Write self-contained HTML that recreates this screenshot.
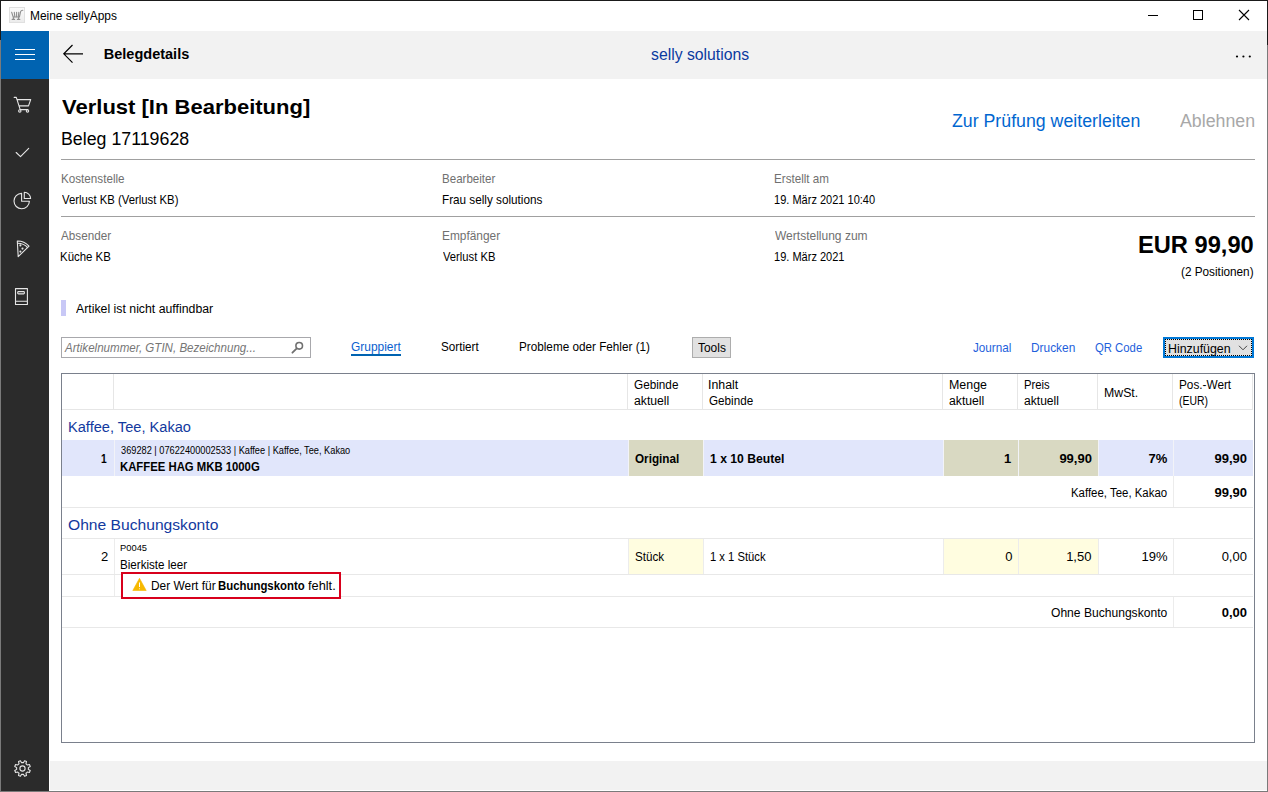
<!DOCTYPE html>
<html><head><meta charset="utf-8">
<style>
html,body{margin:0;padding:0;}
body{width:1268px;height:792px;overflow:hidden;position:relative;background:#fff;font-family:"Liberation Sans",sans-serif;color:#000;}
.a{position:absolute;}
.t{position:absolute;white-space:pre;transform-origin:0 0;}
.hl{position:absolute;height:1px;}
.vl{position:absolute;width:1px;}
svg{position:absolute;overflow:visible;}
</style></head><body>
<!-- window border -->
<div class="a" style="left:0;top:0;width:1268px;height:1px;background:#1a1a1a"></div>
<div class="a" style="left:0;top:0;width:1px;height:40px;background:#1a1a1a"></div>
<div class="a" style="left:0;top:40px;width:1px;height:752px;background:#7a7a7a"></div>
<div class="a" style="left:1267px;top:0;width:1px;height:45px;background:#1a1a1a"></div>
<div class="a" style="left:1267px;top:45px;width:1px;height:747px;background:#7a7a7a"></div>
<div class="a" style="left:0;top:791px;width:1268px;height:1px;background:#7a7a7a"></div>

<!-- app icon -->
<div class="a" style="left:9px;top:7px;width:14px;height:14px;border:1px solid #e0e0e0;background:linear-gradient(#fbfbfb,#ececec)"></div>
<svg style="left:0;top:0" width="30" height="30" viewBox="0 0 30 30"><g fill="none" stroke="#8e8e8e" stroke-width="1.1" stroke-linecap="round"><path d="M11.6 12.2 L13.2 17 H19.4 L20.6 11.6 Q21 10.2 22.8 10.2"/><path d="M14.3 12.2 L14.8 16.6 M16.6 12.2 V16.6 M18.8 12.2 L18.4 16.6"/><path d="M12.2 19.4 H14.6 M17.4 19.4 H19.8 M13.4 17.2 V19.2 M18.6 17.2 V19.2"/></g></svg>
<!-- title bar controls -->
<div class="a" style="left:1148px;top:15px;width:10px;height:1px;background:#000"></div>
<div class="a" style="left:1193px;top:10px;width:8px;height:8px;border:1px solid #000"></div>
<svg style="left:0;top:0" width="1268" height="30"><path d="M1239 10 L1249 20 M1249 10 L1239 20" stroke="#000" stroke-width="1.1" fill="none"/></svg>

<!-- hamburger -->
<div class="a" style="left:1px;top:31px;width:48px;height:48px;background:#0063b1"></div>
<div class="a" style="left:15px;top:49px;width:20px;height:1px;background:#fff"></div>
<div class="a" style="left:15px;top:54px;width:20px;height:1px;background:#fff"></div>
<div class="a" style="left:15px;top:59px;width:20px;height:1px;background:#fff"></div>
<!-- nav -->
<div class="a" style="left:1px;top:79px;width:48px;height:712px;background:#2b2b2b"></div>
<svg style="left:0;top:0" width="50" height="792" viewBox="0 0 50 792">
 <g fill="none" stroke="#e6e6e6" stroke-width="1.1" stroke-linecap="round" stroke-linejoin="round">
  <!-- cart -->
  <path d="M14.2 97.4 H16.3 L20.2 109.6 H27.8 M16.9 99.6 H30.7 L28.5 105.9 H19.2"/>
  <circle cx="19.8" cy="110.9" r="1.2"/><circle cx="27.5" cy="110.9" r="1.2"/>
  <!-- check -->
  <path d="M16.2 152.5 L20.5 156.7 L28.7 148.3"/>
  <!-- pie -->
  <path d="M21.6 193.4 A7.7 7.7 0 1 0 29.4 201.3 H21.6 Z"/>
  <path d="M24.3 192.2 A6.4 6.4 0 0 1 30.6 198.5 H24.3 Z"/>
  <!-- pizza -->
  <path d="M17.3 241 Q24 240.8 29 246.2 L18.2 256.6 Z"/>
  <path d="M17.6 243.2 Q23.8 243.2 27.6 247.6"/>
  <circle cx="20.4" cy="245.4" r="0.5"/><circle cx="22.5" cy="248.6" r="0.5"/><circle cx="20.4" cy="251.6" r="0.5"/>
  <!-- book -->
  <path d="M15.5 288.6 H27.4 V304.5 H15.5 Z M15.5 301.2 H27.4"/>
  <rect x="17.7" y="291.6" width="6.7" height="2.3" rx="0.8"/>
  <!-- gear -->
  <path d="M22.50 762.60 L23.40 762.67 L24.58 760.77 L26.49 761.57 L25.99 763.74 L26.67 764.33 L27.26 765.01 L29.43 764.51 L30.23 766.42 L28.33 767.60 L28.40 768.50 L28.33 769.40 L30.23 770.58 L29.43 772.49 L27.26 771.99 L26.67 772.67 L25.99 773.26 L26.49 775.43 L24.58 776.23 L23.40 774.33 L22.50 774.40 L21.60 774.33 L20.42 776.23 L18.51 775.43 L19.01 773.26 L18.33 772.67 L17.74 771.99 L15.57 772.49 L14.77 770.58 L16.67 769.40 L16.60 768.50 L16.67 767.60 L14.77 766.42 L15.57 764.51 L17.74 765.01 L18.33 764.33 L19.01 763.74 L18.51 761.57 L20.42 760.77 L21.60 762.67 Z"/>
  <circle cx="22.5" cy="768.5" r="2.6"/>
 </g>
</svg>

<!-- header -->
<div class="a" style="left:50px;top:31px;width:1217px;height:48px;background:#f2f2f2"></div>
<svg style="left:0;top:0" width="1268" height="80"><path d="M63.8 53.8 H83 M72.5 45 L63.8 53.8 L72.5 62.6" fill="none" stroke="#000" stroke-width="1.2"/>
<circle cx="1237" cy="56.5" r="1.1" fill="#000"/><circle cx="1243.4" cy="56.5" r="1.1" fill="#000"/><circle cx="1249.8" cy="56.5" r="1.1" fill="#000"/></svg>

<!-- bottom bar -->
<div class="a" style="left:50px;top:761px;width:1217px;height:29px;background:#f2f2f2"></div>

<!-- separators -->
<div class="hl" style="left:61px;top:159px;width:1194px;background:#a0a0a0"></div>
<div class="hl" style="left:61px;top:216px;width:1194px;background:#a0a0a0"></div>

<!-- info bar -->
<div class="a" style="left:61px;top:300px;width:5px;height:16px;background:#c8c8f6"></div>

<!-- search -->
<div class="a" style="left:61px;top:337px;width:248px;height:19px;border:1px solid #a8a8ac"></div>
<svg style="left:0;top:0" width="400" height="400"><circle cx="299.2" cy="345.8" r="3.3" fill="none" stroke="#707070" stroke-width="1.6"/><path d="M296.8 348.3 L292.4 352.7" stroke="#707070" stroke-width="1.8" stroke-linecap="round"/></svg>
<div class="a" style="left:351px;top:354px;width:50px;height:2px;background:#0063b1"></div>
<!-- tools -->
<div class="a" style="left:692px;top:337px;width:37px;height:19px;background:#e1e1e1;border:1px solid #adadad"></div>
<!-- hinzufuegen -->
<div class="a" style="left:1163px;top:337px;width:87px;height:17px;background:#e1e1e1;border:2px solid #0078d7"></div>
<div class="a" style="left:1165px;top:339px;width:85px;height:15px;border:1px dotted #000"></div>
<svg style="left:0;top:0" width="1268" height="400"><path d="M1239 345.8 L1243 349.8 L1247 345.8" fill="none" stroke="#444" stroke-width="1"/></svg>

<!-- table -->
<div class="a" style="left:61px;top:373px;width:1192px;height:368px;border:1px solid #7a808c"></div>
<div class="hl" style="left:62px;top:409px;width:1191px;background:#e6e6e6"></div>
<div class="vl" style="left:113px;top:374px;height:35px;background:#e6e6e6"></div><div class="vl" style="left:627px;top:374px;height:35px;background:#e6e6e6"></div><div class="vl" style="left:702px;top:374px;height:35px;background:#e6e6e6"></div><div class="vl" style="left:942px;top:374px;height:35px;background:#e6e6e6"></div><div class="vl" style="left:1017px;top:374px;height:35px;background:#e6e6e6"></div><div class="vl" style="left:1097px;top:374px;height:35px;background:#e6e6e6"></div><div class="vl" style="left:1172px;top:374px;height:35px;background:#e6e6e6"></div><div class="vl" style="left:1252px;top:374px;height:35px;background:#e6e6e6"></div>
<!-- row1 -->
<div class="a" style="left:62px;top:440px;width:1191px;height:36px;background:#e1e6fb"></div>
<div class="a" style="left:629px;top:440px;width:74px;height:36px;background:#d9d9c2"></div>
<div class="a" style="left:944px;top:440px;width:74px;height:36px;background:#d9d9c2"></div>
<div class="a" style="left:1019px;top:440px;width:79px;height:36px;background:#d9d9c2"></div>
<div class="vl" style="left:114px;top:440px;height:36px;background:#f2f3f8"></div><div class="vl" style="left:628px;top:440px;height:36px;background:#f2f3f8"></div><div class="vl" style="left:703px;top:440px;height:36px;background:#f2f3f8"></div><div class="vl" style="left:943px;top:440px;height:36px;background:#f2f3f8"></div><div class="vl" style="left:1018px;top:440px;height:36px;background:#f2f3f8"></div><div class="vl" style="left:1098px;top:440px;height:36px;background:#f2f3f8"></div><div class="vl" style="left:1173px;top:440px;height:36px;background:#f2f3f8"></div><div class="vl" style="left:1173px;top:476px;height:31px;background:#ececec"></div>
<div class="hl" style="left:62px;top:507px;width:1191px;background:#e8e8e8"></div>
<div class="hl" style="left:62px;top:538px;width:1191px;background:#e8e8e8"></div>
<div class="a" style="left:629px;top:539px;width:74px;height:35px;background:#fffde0"></div>
<div class="a" style="left:944px;top:539px;width:74px;height:35px;background:#fffde0"></div>
<div class="a" style="left:1019px;top:539px;width:79px;height:35px;background:#fffde0"></div>
<div class="vl" style="left:114px;top:539px;height:35px;background:#ececec"></div><div class="vl" style="left:628px;top:539px;height:35px;background:#ececec"></div><div class="vl" style="left:703px;top:539px;height:35px;background:#ececec"></div><div class="vl" style="left:943px;top:539px;height:35px;background:#ececec"></div><div class="vl" style="left:1018px;top:539px;height:35px;background:#ececec"></div><div class="vl" style="left:1098px;top:539px;height:35px;background:#ececec"></div><div class="vl" style="left:1173px;top:539px;height:35px;background:#ececec"></div><div class="vl" style="left:114px;top:575px;height:21px;background:#ececec"></div><div class="vl" style="left:1173px;top:597px;height:30px;background:#ececec"></div>
<div class="hl" style="left:62px;top:574px;width:1191px;background:#e8e8e8"></div>
<div class="hl" style="left:62px;top:596px;width:1191px;background:#e8e8e8"></div>
<div class="hl" style="left:62px;top:627px;width:1191px;background:#e8e8e8"></div>
<!-- error box -->
<div class="a" style="left:121px;top:572px;width:216px;height:23px;border:2px solid #d8001c;background:#fff"></div>
<svg style="left:0;top:0" width="400" height="700"><path d="M139.5 578.3 L146.2 590.5 H132.8 Z" fill="#f7b900" stroke="#f7b900" stroke-width="0.6" stroke-linejoin="round"/><path d="M139.5 582.5 V587" stroke="#fff" stroke-width="1"/><circle cx="139.5" cy="588.7" r="0.5" fill="#fff"/></svg>

<div class="t" style="left:29.55px;top:8px;font-size:12.5px;line-height:17px;transform:scaleX(0.9546);">Meine sellyApps</div>
<div class="t" style="left:103.80px;top:45px;font-size:14.5px;line-height:19px;font-weight:700;">Belegdetails</div>
<div class="t" style="left:651.01px;top:44px;font-size:16px;line-height:21px;color:#0a3aa0;transform:scaleX(0.9848);">selly solutions</div>
<div class="t" style="left:61.90px;top:93px;font-size:21px;line-height:28px;font-weight:700;transform:scaleX(1.0481);">Verlust [In Bearbeitung]</div>
<div class="t" style="left:60.58px;top:128px;font-size:17.5px;line-height:23px;transform:scaleX(1.0157);">Beleg 17119628</div>
<div class="t" style="left:952.09px;top:110px;font-size:17.5px;line-height:23px;color:#0066d0;transform:scaleX(1.0138);">Zur Prüfung weiterleiten</div>
<div class="t" style="left:1180.20px;top:110px;font-size:17.5px;line-height:23px;color:#a8a8a8;transform:scaleX(1.0148);">Ablehnen</div>
<div class="t" style="left:60.80px;top:170px;font-size:13px;line-height:17px;color:#707070;transform:scaleX(0.8977);">Kostenstelle</div>
<div class="t" style="left:441.81px;top:170px;font-size:13px;line-height:17px;color:#707070;transform:scaleX(0.8887);">Bearbeiter</div>
<div class="t" style="left:773.81px;top:170px;font-size:13px;line-height:17px;color:#707070;transform:scaleX(0.8947);">Erstellt am</div>
<div class="t" style="left:61.70px;top:191px;font-size:13px;line-height:17px;transform:scaleX(0.8711);">Verlust KB (Verlust KB)</div>
<div class="t" style="left:441.60px;top:191px;font-size:13px;line-height:17px;transform:scaleX(0.9020);">Frau selly solutions</div>
<div class="t" style="left:773.94px;top:191px;font-size:13px;line-height:17px;transform:scaleX(0.8481);">19. März 2021 10:40</div>
<div class="t" style="left:61.00px;top:227px;font-size:13px;line-height:17px;color:#707070;transform:scaleX(0.8988);">Absender</div>
<div class="t" style="left:441.79px;top:227px;font-size:13px;line-height:17px;color:#707070;transform:scaleX(0.9142);">Empfänger</div>
<div class="t" style="left:774.70px;top:227px;font-size:13px;line-height:17px;color:#707070;transform:scaleX(0.9240);">Wertstellung zum</div>
<div class="t" style="left:60.12px;top:248px;font-size:13px;line-height:17px;transform:scaleX(0.8799);">Küche KB</div>
<div class="t" style="left:442.70px;top:248px;font-size:13px;line-height:17px;transform:scaleX(0.8630);">Verlust KB</div>
<div class="t" style="left:773.94px;top:248px;font-size:13px;line-height:17px;transform:scaleX(0.8483);">19. März 2021</div>
<div class="t" style="left:1138.15px;top:229px;font-size:24.5px;line-height:32px;font-weight:700;transform:scaleX(0.9657);">EUR 99,90</div>
<div class="t" style="left:1181.14px;top:264px;font-size:12.5px;line-height:17px;transform:scaleX(0.9410);">(2 Positionen)</div>
<div class="t" style="left:76.20px;top:301px;font-size:12.5px;line-height:17px;transform:scaleX(0.9838);">Artikel ist nicht auffindbar</div>
<div class="t" style="left:65.02px;top:339px;font-size:13px;line-height:17px;color:#767676;font-style:italic;transform:scaleX(0.8897);">Artikelnummer, GTIN, Bezeichnung...</div>
<div class="t" style="left:351.05px;top:338px;font-size:13px;line-height:17px;color:#0a5fcf;transform:scaleX(0.9183);">Gruppiert</div>
<div class="t" style="left:441.15px;top:338px;font-size:13px;line-height:17px;transform:scaleX(0.8988);">Sortiert</div>
<div class="t" style="left:518.50px;top:338px;font-size:13px;line-height:17px;transform:scaleX(0.9017);">Probleme oder Fehler (1)</div>
<div class="t" style="left:697.52px;top:339px;font-size:13px;line-height:17px;transform:scaleX(0.9177);">Tools</div>
<div class="t" style="left:972.82px;top:339px;font-size:13px;line-height:17px;color:#1e5fdc;transform:scaleX(0.9004);">Journal</div>
<div class="t" style="left:1030.89px;top:339px;font-size:13px;line-height:17px;color:#1e5fdc;transform:scaleX(0.9146);">Drucken</div>
<div class="t" style="left:1095.08px;top:339px;font-size:13px;line-height:17px;color:#1e5fdc;transform:scaleX(0.8707);">QR Code</div>
<div class="t" style="left:1167.75px;top:340px;font-size:13px;line-height:17px;transform:scaleX(0.9525);">Hinzufügen</div>
<div class="t" style="left:633.91px;top:377px;font-size:12px;line-height:16px;transform:scaleX(0.9798);">Gebinde</div>
<div class="t" style="left:633.99px;top:393px;font-size:12px;line-height:16px;transform:scaleX(1.0173);">aktuell</div>
<div class="t" style="left:708.47px;top:377px;font-size:12px;line-height:16px;transform:scaleX(1.0276);">Inhalt</div>
<div class="t" style="left:709.02px;top:393px;font-size:12px;line-height:16px;transform:scaleX(0.9730);">Gebinde</div>
<div class="t" style="left:948.57px;top:377px;font-size:12px;line-height:16px;transform:scaleX(1.0335);">Menge</div>
<div class="t" style="left:948.99px;top:393px;font-size:12px;line-height:16px;transform:scaleX(1.0173);">aktuell</div>
<div class="t" style="left:1023.76px;top:377px;font-size:12px;line-height:16px;transform:scaleX(0.9370);">Preis</div>
<div class="t" style="left:1024.10px;top:393px;font-size:12px;line-height:16px;transform:scaleX(1.0083);">aktuell</div>
<div class="t" style="left:1103.58px;top:385px;font-size:12px;line-height:16px;transform:scaleX(1.0255);">MwSt.</div>
<div class="t" style="left:1178.72px;top:377px;font-size:12px;line-height:16px;transform:scaleX(0.9811);">Pos.-Wert</div>
<div class="t" style="left:1178.99px;top:393px;font-size:12px;line-height:16px;transform:scaleX(0.8675);">(EUR)</div>
<div class="t" style="left:67.87px;top:416px;font-size:15.5px;line-height:21px;color:#12399e;transform:scaleX(0.9428);">Kaffee, Tee, Kakao</div>
<div class="t" style="left:101.37px;top:450px;font-size:13px;line-height:17px;font-weight:700;transform:scaleX(0.7869);">1</div>
<div class="t" style="left:120.72px;top:444px;font-size:10px;line-height:13px;transform:scaleX(0.9223);">369282 | 07622400002533 | Kaffee | Kaffee, Tee, Kakao</div>
<div class="t" style="left:120.30px;top:458px;font-size:13px;line-height:17px;font-weight:700;transform:scaleX(0.8713);">KAFFEE HAG MKB 1000G</div>
<div class="t" style="left:634.55px;top:450px;font-size:13px;line-height:17px;font-weight:700;transform:scaleX(0.9013);">Original</div>
<div class="t" style="left:710.45px;top:450px;font-size:13px;line-height:17px;font-weight:700;transform:scaleX(0.9361);">1 x 10 Beutel</div>
<div class="t" style="left:1004.10px;top:450px;font-size:13px;line-height:17px;font-weight:700;">1</div>
<div class="t" style="left:1059.40px;top:450px;font-size:13px;line-height:17px;font-weight:700;">99,90</div>
<div class="t" style="left:1148.47px;top:450px;font-size:13px;line-height:17px;font-weight:700;">7%</div>
<div class="t" style="left:1214.50px;top:450px;font-size:13px;line-height:17px;font-weight:700;">99,90</div>
<div class="t" style="left:1071.09px;top:485px;font-size:12.5px;line-height:17px;transform:scaleX(0.9139);">Kaffee, Tee, Kakao</div>
<div class="t" style="left:1214.50px;top:484px;font-size:13px;line-height:17px;font-weight:700;">99,90</div>
<div class="t" style="left:67.99px;top:514px;font-size:15.5px;line-height:21px;color:#12399e;transform:scaleX(1.0084);">Ohne Buchungskonto</div>
<div class="t" style="left:101.00px;top:548px;font-size:13px;line-height:17px;">2</div>
<div class="t" style="left:120.27px;top:542px;font-size:9px;line-height:12px;transform:scaleX(1.0392);">P0045</div>
<div class="t" style="left:120.07px;top:557px;font-size:12.5px;line-height:17px;transform:scaleX(0.9285);">Bierkiste leer</div>
<div class="t" style="left:634.55px;top:548px;font-size:13px;line-height:17px;transform:scaleX(0.8968);">Stück</div>
<div class="t" style="left:710.22px;top:548px;font-size:13px;line-height:17px;transform:scaleX(0.8645);">1 x 1 Stück</div>
<div class="t" style="left:1005.20px;top:548px;font-size:13px;line-height:17px;">0</div>
<div class="t" style="left:1066.13px;top:548px;font-size:13px;line-height:17px;">1,50</div>
<div class="t" style="left:1141.44px;top:548px;font-size:13px;line-height:17px;">19%</div>
<div class="t" style="left:1221.63px;top:548px;font-size:13px;line-height:17px;">0,00</div>
<div class="t" style="left:150.55px;top:578px;font-size:12.5px;line-height:17px;transform:scaleX(0.9524);">Der Wert für</div>
<div class="t" style="left:218.07px;top:578px;font-size:12.5px;line-height:17px;font-weight:700;transform:scaleX(0.9117);">Buchungskonto</div>
<div class="t" style="left:308.00px;top:578px;font-size:12.5px;line-height:17px;transform:scaleX(1.0221);">fehlt.</div>
<div class="t" style="left:1051.22px;top:605px;font-size:12.5px;line-height:17px;transform:scaleX(0.9667);">Ohne Buchungskonto</div>
<div class="t" style="left:1221.73px;top:604px;font-size:13px;line-height:17px;font-weight:700;">0,00</div>
</body></html>
